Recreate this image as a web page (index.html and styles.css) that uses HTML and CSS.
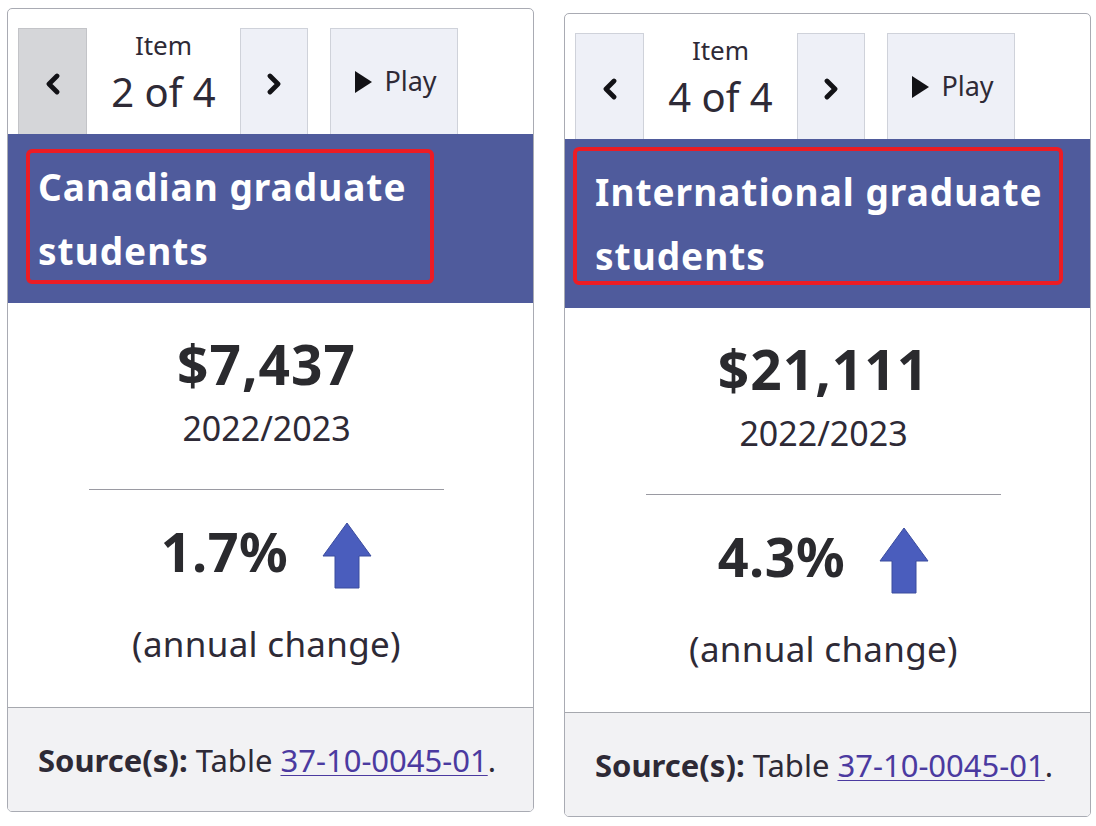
FILE: index.html
```html
<!DOCTYPE html>
<html lang="en">
<head>
<meta charset="utf-8">
<title>Tuition fees</title>
<link rel="stylesheet" href="styles.css">
</head>
<body>
<div class="page">
  <section class="card">
    <div class="nav">
      <button class="btn btn-prev btn-disabled" aria-label="Previous">
        <svg class="chev" width="18" height="22" viewBox="0 0 18 22"><polyline points="13,3 5,11 13,19"/></svg>
      </button>
      <div class="counter"><span class="counter-label">Item</span><span class="counter-value">2 of 4</span></div>
      <button class="btn btn-next" aria-label="Next">
        <svg class="chev" width="18" height="22" viewBox="0 0 18 22"><polyline points="5,3 13,11 5,19"/></svg>
      </button>
      <button class="btn btn-play">
        <svg class="tri" width="17" height="22" viewBox="0 0 17 22"><polygon points="0,0 17,11 0,22"/></svg>
        <span>Play</span>
      </button>
    </div>
    <div class="header">
      <h2 class="title">Canadian graduate students</h2>
      <span class="highlight highlight-a"></span>
    </div>
    <div class="content">
      <div class="amount">$7,437</div>
      <div class="year">2022/2023</div>
      <hr class="divider">
      <div class="change">
        <span class="pct">1.7%</span>
        <svg class="arrow" width="50" height="67" viewBox="0 0 50 67"><polygon points="25,1 49,34 37,34 37,66 13,66 13,34 1,34"/></svg>
      </div>
      <div class="note">(annual change)</div>
    </div>
    <div class="footer">
      <p class="source"><strong>Source(s):</strong> Table <a href="#">37-10-0045-01</a>.</p>
    </div>
  </section>

  <section class="card card-offset">
    <div class="nav">
      <button class="btn btn-prev" aria-label="Previous">
        <svg class="chev" width="18" height="22" viewBox="0 0 18 22"><polyline points="13,3 5,11 13,19"/></svg>
      </button>
      <div class="counter"><span class="counter-label">Item</span><span class="counter-value">4 of 4</span></div>
      <button class="btn btn-next" aria-label="Next">
        <svg class="chev" width="18" height="22" viewBox="0 0 18 22"><polyline points="5,3 13,11 5,19"/></svg>
      </button>
      <button class="btn btn-play">
        <svg class="tri" width="17" height="22" viewBox="0 0 17 22"><polygon points="0,0 17,11 0,22"/></svg>
        <span>Play</span>
      </button>
    </div>
    <div class="header">
      <h2 class="title">International graduate students</h2>
      <span class="highlight highlight-b"></span>
    </div>
    <div class="content">
      <div class="amount">$21,111</div>
      <div class="year">2022/2023</div>
      <hr class="divider">
      <div class="change">
        <span class="pct">4.3%</span>
        <svg class="arrow" width="50" height="67" viewBox="0 0 50 67"><polygon points="25,1 49,34 37,34 37,66 13,66 13,34 1,34"/></svg>
      </div>
      <div class="note">(annual change)</div>
    </div>
    <div class="footer">
      <p class="source"><strong>Source(s):</strong> Table <a href="#">37-10-0045-01</a>.</p>
    </div>
  </section>
</div>
</body>
</html>
```
FILE: styles.css
```css
html, body {
  margin: 0;
  padding: 0;
  background: #ffffff;
}

body {
  font-family: "Noto Sans", "Open Sans", "DejaVu Sans", sans-serif;
  color: #2e2a36;
}

.page {
  display: flex;
  align-items: flex-start;
  gap: 30px;
  padding: 8px 0 0 7px;
}

.card {
  width: 527px;
  box-sizing: border-box;
  border: 1px solid #a9abb3;
  border-radius: 5px;
  overflow: hidden;
  background: #ffffff;
}

.card-offset {
  margin-top: 5px;
}

/* navigation row */
.nav {
  display: flex;
  align-items: flex-end;
  height: 125px;
  box-sizing: border-box;
  padding: 19px 0 0 10px;
}

.btn {
  height: 106px;
  box-sizing: border-box;
  border: 1px solid #cfd2da;
  border-bottom: 0;
  background: #eef0f7;
  display: flex;
  align-items: center;
  justify-content: center;
  padding: 0;
  margin: 0;
  font-family: inherit;
  color: #2e2a36;
}

.btn-disabled {
  background: #d5d6d9;
  border-color: #c3c4c8;
}

.btn-prev {
  width: 69px;
}

.btn-next {
  width: 68px;
  margin-right: 22px;
}

.btn-play {
  width: 128px;
  gap: 12px;
  padding-left: 4px;
  font-size: 27px;
  line-height: 32px;
}

.btn-play span {
  margin-top: -2px;
}

.chev {
  margin-top: 4px;
}

.chev polyline {
  fill: none;
  stroke: #121216;
  stroke-width: 4.8;
  stroke-linecap: round;
  stroke-linejoin: round;
}

.tri polygon {
  fill: #121216;
}

.counter {
  width: 153px;
  height: 106px;
  box-sizing: border-box;
  display: flex;
  flex-direction: column;
  align-items: center;
  padding-top: 2px;
}

.counter-label {
  font-size: 26px;
  line-height: 30px;
}

.counter-value {
  font-size: 40px;
  line-height: 48px;
  margin-top: 8px;
}

/* header band */
.header {
  position: relative;
  background: #4f5b9c;
  padding: 21px 10px 20px 30px;
}

.title {
  margin: 0;
  font-size: 37px;
  line-height: 64px;
  letter-spacing: 1px;
  font-weight: 700;
  color: #ffffff;
}

.highlight {
  position: absolute;
  box-sizing: border-box;
  border: 4px solid #ec1c24;
  border-radius: 6px;
}

.highlight-a {
  left: 18px;
  top: 15px;
  width: 408px;
  height: 135px;
}

.highlight-b {
  left: 8px;
  top: 8px;
  width: 490px;
  height: 138px;
}

/* main figures */
.content {
  display: flex;
  flex-direction: column;
  align-items: center;
  padding: 29px 8px 41px 0;
}

.amount {
  font-size: 55px;
  line-height: 64px;
  letter-spacing: 1px;
  font-weight: 700;
  color: #2a2a2e;
}

.year {
  font-size: 34px;
  line-height: 44px;
  margin-top: 10px;
}

.divider {
  width: 355px;
  height: 1px;
  margin: 39px 0 0 0;
  border: 0;
  background: #9a9aa2;
}

.change {
  display: flex;
  align-items: center;
  gap: 34px;
  height: 76px;
  margin-top: 23px;
}

.pct {
  font-size: 54px;
  line-height: 64px;
  letter-spacing: 0.5px;
  font-weight: 700;
  color: #2a2a2e;
}

.arrow {
  margin-top: 9px;
}

.arrow polygon {
  fill: #4a5dbd;
  stroke: #3b4c9e;
  stroke-width: 1;
}

.note {
  font-size: 35px;
  line-height: 44px;
  letter-spacing: 0.3px;
  margin-top: 33px;
}

/* footer */
.footer {
  border-top: 1px solid #a6a8ae;
  background: #f2f2f4;
  padding: 32px 20px 31px 30px;
}

.source {
  margin: 0;
  font-size: 31px;
  line-height: 40px;
  white-space: nowrap;
}

.source strong {
  font-weight: 700;
}

.source a {
  color: #4b3aa0;
  text-decoration: underline;
  text-underline-offset: 3px;
  text-decoration-thickness: 1px;
}
```
